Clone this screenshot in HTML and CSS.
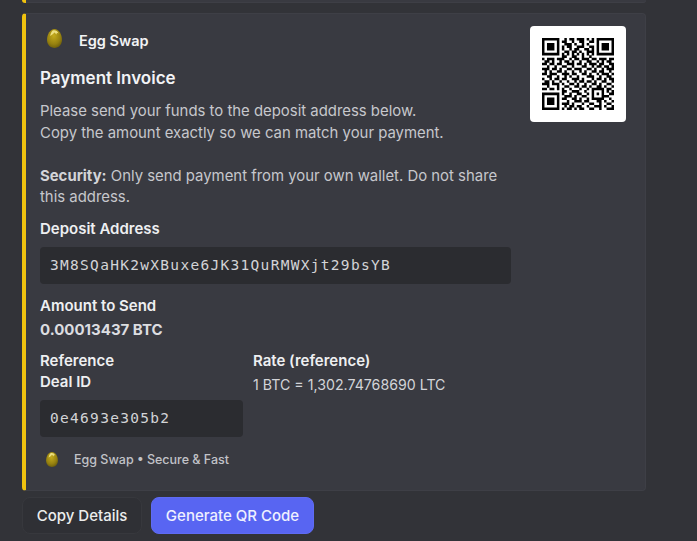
FILE: index.html
```html
<!DOCTYPE html>
<html lang="en">
<head>
<meta charset="utf-8">
<title>Egg Swap</title>
<link rel="stylesheet" href="styles.css">
</head>
<body>
<svg class="defs" width="0" height="0" aria-hidden="true">
  <defs>
    <radialGradient id="egg" cx="0.45" cy="0.35" r="0.75">
      <stop offset="0" stop-color="#c4ab1c"/>
      <stop offset="0.6" stop-color="#968110"/>
      <stop offset="1" stop-color="#5f520a"/>
    </radialGradient>
    <symbol id="eggicon" viewBox="0 0 15 19">
      <path d="M7.5 0C11.8 0 15 5.2 15 10.8C15 15.8 11.6 19 7.5 19C3.4 19 0 15.8 0 10.8C0 5.2 3.2 0 7.5 0Z" fill="url(#egg)"/>
      <path d="M5.6 1.6C7.5 .6 10.4 1.4 11.6 4.4L10 3.8L9.4 5.6L7.6 3.4L5.4 5.6L3.2 7C3.6 5 4.5 2.6 5.6 1.6Z" fill="#ecdf7e"/>
    </symbol>
  </defs>
</svg>
<main class="chat">
  <div class="prev-card"></div>
  <article class="card">
    <div class="card-main">
      <div class="author">
        <svg class="egg" width="15" height="19"><use href="#eggicon"/></svg>
        <span class="author-name">Egg Swap</span>
      </div>
      <h2 class="title">Payment Invoice</h2>
      <p class="desc">Please send your funds to the deposit address below.<br>Copy the amount exactly so we can match your payment.<br><br><strong>Security:</strong> Only send payment from your own wallet. Do not share this address.</p>
      <div class="label label-first">Deposit Address</div>
      <div class="code">3M8SQaHK2wXBuxe6JK31QuRMWXjt29bsYB</div>
      <div class="label label-amount">Amount to Send</div>
      <div class="amount">0.00013437 BTC</div>
      <div class="columns">
        <div class="col-ref">
          <div class="label">Reference</div>
          <div class="label">Deal ID</div>
          <div class="code code-ref">0e4693e305b2</div>
        </div>
        <div class="col-rate">
          <div class="label">Rate (reference)</div>
          <div class="rate">1 BTC = 1,302.74768690 LTC</div>
        </div>
      </div>
      <div class="footer">
        <svg class="egg-small" width="12" height="15"><use href="#eggicon"/></svg>
        <span>Egg Swap • Secure &amp; Fast</span>
      </div>
    </div>
    <div class="thumb">
      <svg class="qr" width="72" height="72" viewBox="0 0 29 29" aria-label="QR code">
        <path fill="none" stroke="#000" stroke-width="1.02" d="M0 .5h7M22 .5h7M0 1.5h1M6 1.5h1M22 1.5h1M28 1.5h1M0 2.5h1M2 2.5h3M6 2.5h1M22 2.5h1M24 2.5h3M28 2.5h1M0 3.5h1M2 3.5h3M6 3.5h1M22 3.5h1M24 3.5h3M28 3.5h1M0 4.5h1M2 4.5h3M6 4.5h1M22 4.5h1M24 4.5h3M28 4.5h1M0 5.5h1M6 5.5h1M22 5.5h1M28 5.5h1M0 6.5h7M22 6.5h7M0 22.5h7M0 23.5h1M6 23.5h1M0 24.5h1M2 24.5h3M6 24.5h1M0 25.5h1M2 25.5h3M6 25.5h1M0 26.5h1M2 26.5h3M6 26.5h1M0 27.5h1M6 27.5h1M0 28.5h7
        M9 .5h1M11 .5h2M14 .5h3M18 .5h1M20 .5h1
        M8 1.5h2M12 1.5h1M15 1.5h2M19 1.5h2
        M9 2.5h3M13 2.5h1M16 2.5h1M18 2.5h1
        M8 3.5h1M10 3.5h2M14 3.5h3M19 3.5h2
        M8 4.5h1M11 4.5h1M13 4.5h2M17 4.5h2M20 4.5h1
        M9 5.5h2M12 5.5h2M15 5.5h1M18 5.5h3
        M8 6.5h1M10 6.5h1M12 6.5h1M14 6.5h1M16 6.5h1M18 6.5h1M20 6.5h1
        M8 7.5h2M12 7.5h2M16 7.5h1M19 7.5h1
        M0 8.5h1M2 8.5h3M6 8.5h3M11 8.5h1M13 8.5h2M16 8.5h3M20 8.5h2M23 8.5h3M27 8.5h2
        M1 9.5h2M4 9.5h1M7 9.5h1M9 9.5h2M12 9.5h1M15 9.5h1M18 9.5h2M22 9.5h1M24 9.5h1M26 9.5h2
        M0 10.5h2M3 10.5h2M6 10.5h2M10 10.5h3M14 10.5h2M17 10.5h1M19 10.5h3M23 10.5h2M27 10.5h2
        M2 11.5h1M5 11.5h1M8 11.5h2M12 11.5h1M16 11.5h2M20 11.5h1M22 11.5h2M25 11.5h2M28 11.5h1
        M0 12.5h3M4 12.5h2M7 12.5h1M10 12.5h2M13 12.5h3M18 12.5h2M21 12.5h1M24 12.5h1M26 12.5h3
        M1 13.5h1M3 13.5h1M6 13.5h2M9 13.5h1M12 13.5h1M15 13.5h1M17 13.5h1M20 13.5h2M23 13.5h2M27 13.5h1
        M0 14.5h2M3 14.5h3M8 14.5h3M12 14.5h2M16 14.5h2M19 14.5h1M22 14.5h1M24 14.5h3M28 14.5h1
        M2 15.5h2M6 15.5h1M9 15.5h1M11 15.5h1M14 15.5h1M18 15.5h3M23 15.5h1M26 15.5h2
        M0 16.5h1M3 16.5h1M5 16.5h2M8 16.5h2M12 16.5h3M16 16.5h1M20 16.5h1M22 16.5h2M25 16.5h1M27 16.5h2
        M1 17.5h2M4 17.5h1M7 17.5h1M10 17.5h1M13 17.5h1M15 17.5h2M18 17.5h2M21 17.5h1M24 17.5h2M28 17.5h1
        M0 18.5h3M4 18.5h3M8 18.5h1M11 18.5h2M14 18.5h1M17 18.5h1M20 18.5h2M23 18.5h1M26 18.5h2
        M2 19.5h1M6 19.5h1M9 19.5h2M13 19.5h2M16 19.5h2M19 19.5h1M22 19.5h2M25 19.5h1M28 19.5h1
        M0 20.5h2M3 20.5h2M6 20.5h1M8 20.5h1M11 20.5h1M15 20.5h1M18 20.5h1M20 20.5h5M26 20.5h2
        M8 21.5h2M12 21.5h3M17 21.5h1M20 21.5h1M24 21.5h1M26 21.5h1M28 21.5h1
        M8 22.5h1M11 22.5h1M14 22.5h2M18 22.5h1M20 22.5h1M22 22.5h1M24 22.5h1M27 22.5h2
        M9 23.5h3M13 23.5h1M16 23.5h2M20 23.5h1M24 23.5h3
        M8 24.5h2M12 24.5h2M15 24.5h1M18 24.5h1M20 24.5h5M27 24.5h1
        M10 25.5h1M13 25.5h3M17 25.5h2M22 25.5h2M25 25.5h1M28 25.5h1
        M8 26.5h3M12 26.5h1M16 26.5h1M19 26.5h2M23 26.5h1M26 26.5h2
        M9 27.5h1M11 27.5h2M14 27.5h2M18 27.5h1M21 27.5h3M25 27.5h1M28 27.5h1
        M8 28.5h1M10 28.5h2M13 28.5h1M15 28.5h2M19 28.5h2M23 28.5h1M26 28.5h3"/>
      </svg>
    </div>
  </article>
  <div class="actions">
    <button class="btn btn-secondary" type="button">Copy Details</button>
    <button class="btn btn-primary" type="button">Generate QR Code</button>
  </div>
</main>
</body>
</html>
```
FILE: styles.css
```css
* { box-sizing: border-box; }
html, body { margin: 0; height: 100%; }
body {
  background: #323338;
  color: #dfe0e3;
  font-family: Inter, "Noto Sans", "Liberation Sans", sans-serif;
  overflow: hidden;
}
.defs { position: absolute; }
.chat {
  display: flex;
  flex-direction: column;
  padding: 0 51px 0 22px;
}
.prev-card {
  height: 3px;
  margin-bottom: 10px;
  background: #393a41;
  border-left: 4px solid #f0c20f;
  border-radius: 0 0 4px 4px;
  box-shadow: inset 0 -1px 0 #3e3f46;
}
.card {
  display: flex;
  gap: 19px;
  align-items: flex-start;
  height: 478px;
  padding: 12px 20px 0 14px;
  background: #393a41;
  border: 1px solid #3e3f46;
  border-left: 4px solid #f0c20f;
  border-radius: 4px;
}
.card-main { width: 471px; flex: none; }
.author {
  display: flex;
  align-items: center;
  height: 28px;
  padding-left: 7px;
}
.egg { flex: none; margin-right: 17px; margin-top: -4px; }
.author-name { font-size: 14.5px; font-weight: 600; color: #f2f3f5; }
.title {
  margin: 13px 0 0;
  font-size: 17px;
  line-height: 22px;
  font-weight: 600;
  color: #f2f3f5;
}
.desc {
  margin: 12px 0 0;
  font-size: 14.9px;
  line-height: 21.5px;
  color: #c6c7cc;
}
.desc strong { font-weight: 700; color: #d3d4d8; }
.label {
  font-size: 15px;
  line-height: 21px;
  font-weight: 600;
  color: #eeeff1;
}
.label-first { margin-top: 9px; }
.label-amount { margin-top: 11px; }
.code {
  height: 37px;
  margin-top: 8px;
  padding-left: 10px;
  background: #2b2c30;
  border-radius: 4px;
  font-family: "DejaVu Sans Mono", monospace;
  font-size: 14.5px;
  letter-spacing: 1.3px;
  line-height: 37px;
  color: #d3d4d7;
}
.amount {
  margin-top: 3px;
  font-size: 15px;
  line-height: 21px;
  font-weight: 700;
  color: #dcdde0;
}
.columns { display: flex; gap: 10px; margin-top: 10px; }
.col-ref { width: 203px; flex: none; }
.rate {
  margin-top: 3px;
  font-size: 14.2px;
  line-height: 21px;
  color: #d3d4d8;
}
.footer {
  display: flex;
  align-items: center;
  height: 20px;
  margin-top: 13px;
  padding-left: 6px;
  font-size: 12.5px;
  font-weight: 500;
  color: #c2c3c8;
}
.egg-small { flex: none; margin-right: 16px; }
.thumb {
  display: flex;
  align-items: center;
  justify-content: center;
  width: 96px;
  height: 96px;
  flex: none;
  background: #fff;
  border-radius: 4px;
}
.qr { display: block; }
.actions { display: flex; gap: 9px; margin-top: 6px; }
.btn {
  height: 37px;
  padding: 0;
  border-radius: 8px;
  font-family: inherit;
  font-size: 15px;
  font-weight: 500;
}
.btn-secondary {
  width: 120px;
  background: #2f3035;
  border: 1px solid #37383d;
  color: #eceded;
}
.btn-primary {
  width: 163px;
  background: #5865f2;
  border: 1px solid #5f6bf3;
  color: #eef0ff;
}
```
